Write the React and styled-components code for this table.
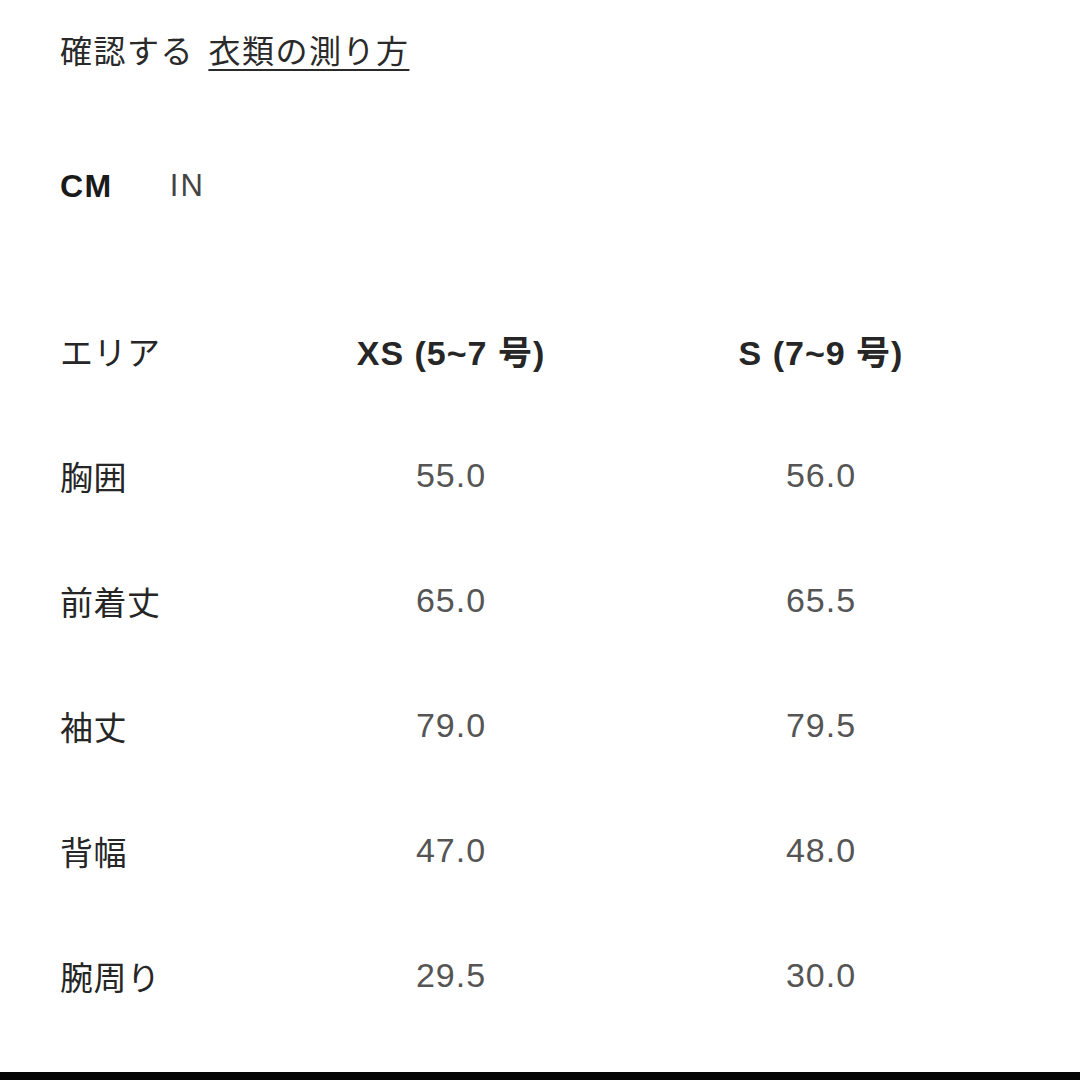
import React from "react";
import styled, { createGlobalStyle } from "styled-components";

const Global = createGlobalStyle`
  html, body { margin: 0; padding: 0; background: #fff; }
  body { font-family: "Liberation Sans", "Noto Sans CJK JP", sans-serif; }
`;

const Page = styled.div`
  min-height: 1080px;
  display: flex;
  flex-direction: column;
  box-sizing: border-box;
`;

const Content = styled.div`
  padding: 28px 0 0 60px;
  display: flex;
  flex-direction: column;
`;

const Title = styled.div`
  font-size: 32px;
  line-height: 48px;
  height: 48px;
  color: #2a2a2a;
  letter-spacing: 1.5px;
  word-spacing: 4px;
`;

const Link = styled.span`
  text-decoration: underline;
  text-decoration-thickness: 2px;
  text-underline-offset: 6px;
`;

const Units = styled.div`
  margin-top: 86px;
  height: 48px;
  display: flex;
  align-items: center;
  gap: 57px;
`;

const Unit = styled.span`
  font-size: ${(p) => (p.$active ? "32px" : "31px")};
  font-weight: ${(p) => (p.$active ? 700 : 400)};
  color: ${(p) => (p.$active ? "#1a1a1a" : "#444")};
  letter-spacing: ${(p) => (p.$active ? "1.5px" : "2px")};
`;

const Table = styled.div`
  margin-top: 78px;
  display: grid;
  grid-template-columns: 206px 370px 370px;
  grid-auto-rows: 125px;
`;

const Cell = styled.div`
  display: flex;
  align-items: center;
  justify-content: ${(p) => (p.$label ? "flex-start" : "center")};
  font-size: ${(p) => (p.$label ? "33px" : "34px")};
  font-weight: ${(p) => (p.$head && !p.$label ? 700 : 400)};
  color: ${(p) => (p.$label || p.$head ? "#262626" : "#555")};
  letter-spacing: ${(p) => (p.$label ? "0.5px" : "1px")};
  white-space: nowrap;
`;

const Bar = styled.div`
  margin-top: auto;
  height: 8px;
  background: #050505;
`;

const rows = [
  ["胸囲", "55.0", "56.0"],
  ["前着丈", "65.0", "65.5"],
  ["袖丈", "79.0", "79.5"],
  ["背幅", "47.0", "48.0"],
  ["腕周り", "29.5", "30.0"],
];

export default function App() {
  return (
    <>
      <Global />
      <Page>
        <Content>
          <Title>
            確認する <Link>衣類の測り方</Link>
          </Title>
          <Units>
            <Unit $active>CM</Unit>
            <Unit>IN</Unit>
          </Units>
          <Table>
            <Cell $head $label>エリア</Cell>
            <Cell $head>XS (5~7 号)</Cell>
            <Cell $head>S (7~9 号)</Cell>
            {rows.map((r) => (
              <React.Fragment key={r[0]}>
                <Cell $label>{r[0]}</Cell>
                <Cell>{r[1]}</Cell>
                <Cell>{r[2]}</Cell>
              </React.Fragment>
            ))}
          </Table>
        </Content>
        <Bar />
      </Page>
    </>
  );
}
